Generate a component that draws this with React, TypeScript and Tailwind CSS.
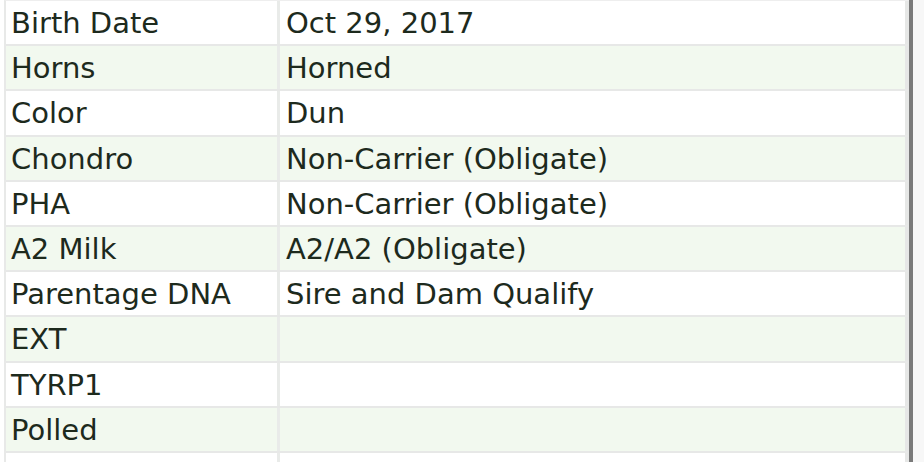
import React from "react";

const rows: [string, string][] = [
  ["Birth Date", "Oct 29, 2017"],
  ["Horns", "Horned"],
  ["Color", "Dun"],
  ["Chondro", "Non-Carrier (Obligate)"],
  ["PHA", "Non-Carrier (Obligate)"],
  ["A2 Milk", "A2/A2 (Obligate)"],
  ["Parentage DNA", "Sire and Dam Qualify"],
  ["EXT", ""],
  ["TYRP1", ""],
  ["Polled", ""],
  ["", ""],
];

export default function App() {
  return (
    <div
      className="w-[924px] h-[462px] overflow-hidden bg-white flex"
      style={{ fontFamily: '"DejaVu Sans", Verdana, sans-serif' }}
    >
      <div className="w-[4px] shrink-0 bg-white" />
      <div className="w-[905px] shrink-0 border-l-2 border-[#e8e9e8] border-t border-t-[#eeeeee] flex flex-col">
        {rows.map(([k, v], i) => (
          <div
            key={i}
            className={`flex h-[45.2px] shrink-0 border-b-2 border-[#e7e8e7] ${
              i % 2 === 1 ? "bg-[#f2f9ef]" : "bg-white"
            }`}
          >
            <div className="w-[274px] shrink-0 pl-[5px] pt-[2px] flex items-center text-[29px] leading-none text-[#1d2a1d] border-r-[3px] border-[#e9ebe9]">
              {k}
            </div>
            <div className="flex-1 pl-[6px] pt-[2px] flex items-center text-[29px] leading-none text-[#1d2a1d] border-r-4 border-[#e6e7e6]">
              {v}
            </div>
          </div>
        ))}
      </div>
      <div className="w-[4px] shrink-0 bg-[#7a7a7a]" />
      <div className="flex-1 bg-[#f7f7f7]" />
    </div>
  );
}
